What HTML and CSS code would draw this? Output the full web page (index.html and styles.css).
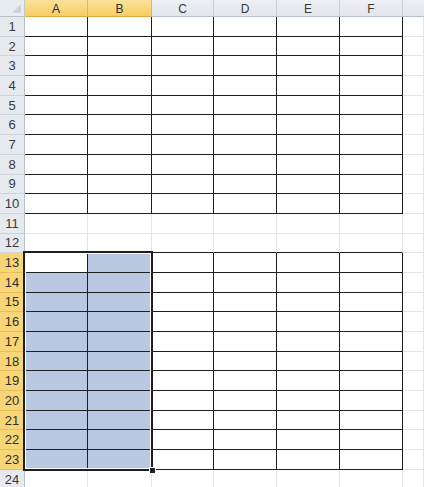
FILE: index.html
```html
<!DOCTYPE html>
<html>
<head>
<meta charset="utf-8">
<link rel="stylesheet" href="styles.css">
</head>
<body>
<div class="sheet">
  <div class="corner"><span class="tri"></span></div><div class="ch on">A</div><div class="ch on">B</div><div class="ch">C</div><div class="ch">D</div><div class="ch">E</div><div class="ch">F</div><div class="ch last"></div>

  <div class="rh">1</div><div class="k"></div><div class="k"></div><div class="k"></div><div class="k"></div><div class="k"></div><div class="k"></div><div class="x"></div>
  <div class="rh">2</div><div class="k"></div><div class="k"></div><div class="k"></div><div class="k"></div><div class="k"></div><div class="k"></div><div class="x"></div>
  <div class="rh">3</div><div class="k"></div><div class="k"></div><div class="k"></div><div class="k"></div><div class="k"></div><div class="k"></div><div class="x"></div>
  <div class="rh">4</div><div class="k"></div><div class="k"></div><div class="k"></div><div class="k"></div><div class="k"></div><div class="k"></div><div class="x"></div>
  <div class="rh">5</div><div class="k"></div><div class="k"></div><div class="k"></div><div class="k"></div><div class="k"></div><div class="k"></div><div class="x"></div>
  <div class="rh">6</div><div class="k"></div><div class="k"></div><div class="k"></div><div class="k"></div><div class="k"></div><div class="k"></div><div class="x"></div>
  <div class="rh">7</div><div class="k"></div><div class="k"></div><div class="k"></div><div class="k"></div><div class="k"></div><div class="k"></div><div class="x"></div>
  <div class="rh">8</div><div class="k"></div><div class="k"></div><div class="k"></div><div class="k"></div><div class="k"></div><div class="k"></div><div class="x"></div>
  <div class="rh">9</div><div class="k"></div><div class="k"></div><div class="k"></div><div class="k"></div><div class="k"></div><div class="k"></div><div class="x"></div>
  <div class="rh">10</div><div class="k"></div><div class="k"></div><div class="k"></div><div class="k"></div><div class="k"></div><div class="k"></div><div class="x"></div>
  <div class="rh">11</div><div class="x"></div><div class="x"></div><div class="x"></div><div class="x"></div><div class="x"></div><div class="x"></div><div class="x"></div>
  <div class="rh">12</div><div class="kb"></div><div class="kb"></div><div class="kb"></div><div class="kb"></div><div class="kb"></div><div class="kb"></div><div class="x"></div>

  <div class="rh on">13</div><div class="k"></div><div class="k s"></div><div class="k"></div><div class="k"></div><div class="k"></div><div class="k"></div><div class="x"></div>
  <div class="rh on">14</div><div class="k s"></div><div class="k s"></div><div class="k"></div><div class="k"></div><div class="k"></div><div class="k"></div><div class="x"></div>
  <div class="rh on">15</div><div class="k s"></div><div class="k s"></div><div class="k"></div><div class="k"></div><div class="k"></div><div class="k"></div><div class="x"></div>
  <div class="rh on">16</div><div class="k s"></div><div class="k s"></div><div class="k"></div><div class="k"></div><div class="k"></div><div class="k"></div><div class="x"></div>
  <div class="rh on">17</div><div class="k s"></div><div class="k s"></div><div class="k"></div><div class="k"></div><div class="k"></div><div class="k"></div><div class="x"></div>
  <div class="rh on">18</div><div class="k s"></div><div class="k s"></div><div class="k"></div><div class="k"></div><div class="k"></div><div class="k"></div><div class="x"></div>
  <div class="rh on">19</div><div class="k s"></div><div class="k s"></div><div class="k"></div><div class="k"></div><div class="k"></div><div class="k"></div><div class="x"></div>
  <div class="rh on">20</div><div class="k s"></div><div class="k s"></div><div class="k"></div><div class="k"></div><div class="k"></div><div class="k"></div><div class="x"></div>
  <div class="rh on">21</div><div class="k s"></div><div class="k s"></div><div class="k"></div><div class="k"></div><div class="k"></div><div class="k"></div><div class="x"></div>
  <div class="rh on">22</div><div class="k s"></div><div class="k s"></div><div class="k"></div><div class="k"></div><div class="k"></div><div class="k"></div><div class="x"></div>
  <div class="rh on">23</div><div class="k s"></div><div class="k s"></div><div class="k"></div><div class="k"></div><div class="k"></div><div class="k"></div><div class="x"></div>
  <div class="rh">24</div><div class="x"></div><div class="x"></div><div class="x"></div><div class="x"></div><div class="x"></div><div class="x"></div><div class="x"></div>

  <div class="selection"><span class="handle"></span></div>
</div>
</body>
</html>
```

FILE: styles.css
```css
* { box-sizing: border-box; }
html, body { margin: 0; padding: 0; background: #fff; overflow: hidden; }
body { font-family: "Liberation Sans", Arial, sans-serif; color: #333; }

.sheet {
  position: relative;
  width: 424px;
  display: grid;
  grid-template-columns: 25px 63px 64px 62px 63px 63px 63px 1fr;
  grid-template-rows: 17px repeat(24, 19.7px);
}

.corner {
  position: relative;
  background: #e9ecf0;
  border-right: 1px solid #c3c9d1;
  border-bottom: 1px solid #b8c0cb;
}
.tri {
  position: absolute;
  right: 3px;
  bottom: 3px;
  width: 0;
  height: 0;
  border-left: 9px solid transparent;
  border-bottom: 9px solid #cdd3db;
}

.ch {
  display: flex;
  align-items: center;
  justify-content: center;
  font-size: 12px;
  color: #3a3a3a;
  background: linear-gradient(#eef0f3, #e3e6eb);
  border-right: 1px solid #c9ced6;
  border-bottom: 1px solid #b8c0cb;
  padding-top: 1px;
}
.ch.on {
  background: linear-gradient(#fbe29a, #f6cd62);
  border-right-color: #e6b44e;
  border-bottom-color: #e2a83c;
  color: #2e2e2e;
}
.ch.last { border-right: none; }

.rh {
  display: flex;
  align-items: center;
  justify-content: center;
  font-size: 13px;
  color: #3a3a3a;
  background: #e6e9ee;
  border-right: 1px solid #b9c0ca;
  border-bottom: 1px solid #cfd4db;
}
.rh.on {
  background: #f8d678;
  border-right-color: #e0a93f;
  border-bottom-color: #e5be5e;
  color: #2e2e2e;
}

.x {
  border-right: 1px solid #e2e4e7;
  border-bottom: 1px solid #e2e4e7;
}
.k {
  border-right: 1px solid #1f1f1f;
  border-bottom: 1px solid #1f1f1f;
}
.kb {
  border-right: 1px solid #e2e4e7;
  border-bottom: 1px solid #1f1f1f;
}
.s { background: #b8c8e1; }

.selection {
  position: absolute;
  left: 23px;
  top: 251px;
  width: 130px;
  height: 220px;
  border: 2px solid #1f1f1f;
  box-shadow: inset 0 0 0 1px #ffffff;
  pointer-events: none;
}
.handle {
  position: absolute;
  right: -5px;
  bottom: -5px;
  width: 7px;
  height: 7px;
  background: #1f1f1f;
  border: 1px solid #fff;
}
```
